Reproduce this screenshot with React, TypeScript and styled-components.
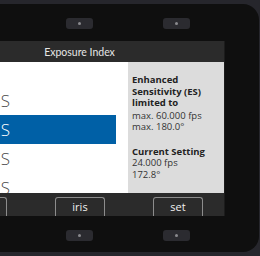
import React from "react";
import styled, { createGlobalStyle } from "styled-components";

const GlobalStyle = createGlobalStyle`
  html, body {
    margin: 0;
    padding: 0;
    background: #26262c;
    width: 260px;
    height: 256px;
    overflow: hidden;
  }
  * { box-sizing: border-box; }
`;

const isoValues = ["1280 ES", "1600 ES", "2000 ES", "2560 ES", "3200 ES"];

const App: React.FC = () => {
  return (
    <>
      <GlobalStyle />
      <Page>
        <Device>
          <PillRow>
            <Pill />
            <Pill />
          </PillRow>
          <Screen>
            <Header>Exposure Index</Header>
            <Body>
              <List>
                {isoValues.map((v, i) => (
                  <ListRow key={v} selected={i === 1}>
                    <span>{v}</span>
                  </ListRow>
                ))}
              </List>
              <Info>
                <InfoTitle>Enhanced Sensitivity (ES) limited to</InfoTitle>
                <InfoLine>max. 60.000 fps</InfoLine>
                <InfoLine>max. 180.0°</InfoLine>
                <InfoTitle className="spaced">Current Setting</InfoTitle>
                <InfoLine>24.000 fps</InfoLine>
                <InfoLine>172.8°</InfoLine>
              </Info>
            </Body>
            <ButtonBar>
              <SoftKey width={60} />
              <SoftKey width={50}>iris</SoftKey>
              <SoftKey width={50}>set</SoftKey>
            </ButtonBar>
          </Screen>
          <PillRow className="bottom">
            <Pill />
            <Pill />
          </PillRow>
        </Device>
      </Page>
    </>
  );
};

export default App;

const Page = styled.div`
  width: 260px;
  height: 256px;
  padding-top: 4px;
  overflow: hidden;
`;

const Device = styled.div`
  margin-left: -80px;
  width: 339px;
  height: 248px;
  background: #0f0f0f;
  border-radius: 0 16px 16px 0;
  display: flex;
  flex-direction: column;
  font-family: "Open Sans", "Noto Sans", sans-serif;
`;

const PillRow = styled.div`
  display: flex;
  gap: 70px;
  padding-left: 146px;
  height: 37px;
  padding-top: 14px;
  &.bottom {
    padding-top: 14px;
    height: 36px;
  }
`;

const Pill = styled.div`
  width: 27px;
  height: 11px;
  border-radius: 3px;
  background: #2b2b30;
  display: flex;
  align-items: center;
  justify-content: center;
  &::after {
    content: "";
    width: 3px;
    height: 3px;
    border-radius: 50%;
    background: #8a8a8e;
  }
`;

const Screen = styled.div`
  width: 305px;
  display: flex;
  flex-direction: column;
  background: #2a2a2a;
  border-right: 1px solid #1c1c1c;
`;

const Header = styled.div`
  height: 21px;
  display: flex;
  align-items: center;
  justify-content: center;
  padding-left: 15px;
  color: #e6e6e6;
  font-family: Lato, "Open Sans", sans-serif;
  font-size: 10.5px;
  background: #2b2b2b;
`;

const Body = styled.div`
  display: flex;
  height: 131px;
  overflow: hidden;
`;

const List = styled.div`
  width: 208px;
  background: #ffffff;
  padding: 24px 12px 0 0;
  display: flex;
  flex-direction: column;
`;

const ListRow = styled.div<{ selected?: boolean }>`
  height: 29px;
  flex-shrink: 0;
  display: flex;
  align-items: center;
  justify-content: flex-end;
  padding-right: 106px;
  font-size: 17px;
  font-weight: 300;
  color: ${(p) => (p.selected ? "#ffffff" : "#4a4a4a")};
  background: ${(p) => (p.selected ? "#0060a6" : "transparent")};
`;

const Info = styled.div`
  flex: 1;
  background: #dcdcdc;
  padding: 12px 4px 0 4px;
  color: #222;
  font-size: 9.5px;
  line-height: 11.5px;
`;

const InfoTitle = styled.div`
  font-weight: 700;
  margin-bottom: 1px;
  &.spaced {
    margin-top: 13px;
    margin-bottom: 0;
  }
`;

const InfoLine = styled.div`
  color: #333;
`;

const ButtonBar = styled.div`
  height: 23px;
  display: flex;
  align-items: flex-end;
  gap: 48px;
  padding-left: 27px;
  background: #2b2b2b;
`;

const SoftKey = styled.div<{ width: number }>`
  width: ${(p) => p.width}px;
  height: 19px;
  border: 1px solid #8c8c8c;
  border-bottom: none;
  border-radius: 3px 3px 0 0;
  color: #f0f0f0;
  font-size: 11px;
  display: flex;
  align-items: center;
  justify-content: center;
  padding-bottom: 2px;
`;
